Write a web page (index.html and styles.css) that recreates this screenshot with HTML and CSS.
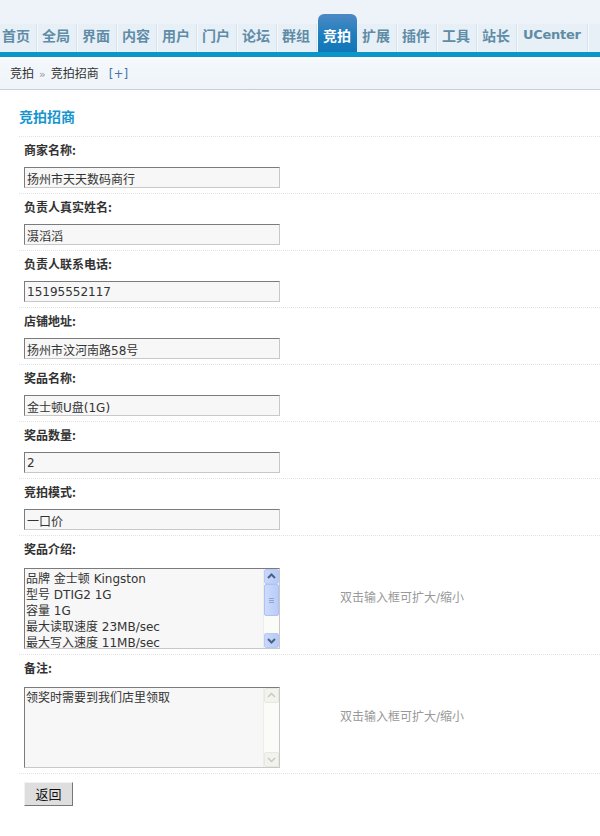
FILE: index.html
```html
<!DOCTYPE html>
<html lang="zh-CN">
<head>
<meta charset="utf-8">
<title>竞拍招商</title>
<link rel="stylesheet" href="styles.css">
</head>
<body>
<div class="header">
  <ul class="nav">
    <li class="item first">首页</li>
    <li class="item">全局</li>
    <li class="item">界面</li>
    <li class="item">内容</li>
    <li class="item">用户</li>
    <li class="item">门户</li>
    <li class="item">论坛</li>
    <li class="item">群组</li>
    <li class="item active">竞拍</li>
    <li class="item">扩展</li>
    <li class="item">插件</li>
    <li class="item">工具</li>
    <li class="item">站长</li>
    <li class="item latin">UCenter</li>
  </ul>
  <div class="bluebar"></div>
</div>
<div class="crumb">
  <span>竞拍</span><span class="sep">»</span><span>竞拍招商</span><a class="plus">[+]</a>
</div>
<div class="content">
  <h3 class="title">竞拍招商</h3>
  <div class="row">
    <div class="label">商家名称:</div>
    <input class="txt" type="text" value="扬州市天天数码商行">
  </div>
  <div class="row">
    <div class="label">负责人真实姓名:</div>
    <input class="txt" type="text" value="滠滔滔">
  </div>
  <div class="row">
    <div class="label">负责人联系电话:</div>
    <input class="txt" type="text" value="15195552117">
  </div>
  <div class="row">
    <div class="label">店铺地址:</div>
    <input class="txt" type="text" value="扬州市汶河南路58号">
  </div>
  <div class="row">
    <div class="label">奖品名称:</div>
    <input class="txt" type="text" value="金士顿U盘(1G)">
  </div>
  <div class="row">
    <div class="label">奖品数量:</div>
    <input class="txt" type="text" value="2">
  </div>
  <div class="row">
    <div class="label">竞拍模式:</div>
    <input class="txt" type="text" value="一口价">
  </div>
  <div class="row split">
    <div class="left">
      <div class="label">奖品介绍:</div>
      <div class="area">
        <div class="areatext">品牌 金士顿 Kingston<br>型号 DTIG2 1G<br>容量 1G<br>最大读取速度 23MB/sec<br>最大写入速度 11MB/sec</div>
        <div class="sbar">
          <div class="sbtn"><svg width="15" height="15" viewBox="0 0 15 15"><path d="M4 9 L7.5 5.5 L11 9" fill="none" stroke="#4d6185" stroke-width="2"/></svg></div>
          <div class="thumb"><svg width="15" height="32" viewBox="0 0 15 32"><path d="M5 14.5h5M5 16.5h5M5 18.5h5" stroke="#8ea4d8" stroke-width="1"/></svg></div>
          <div class="track"></div>
          <div class="sbtn"><svg width="15" height="15" viewBox="0 0 15 15"><path d="M4 6 L7.5 9.5 L11 6" fill="none" stroke="#4d6185" stroke-width="2"/></svg></div>
        </div>
      </div>
    </div>
    <div class="hint">双击输入框可扩大/缩小</div>
  </div>
  <div class="row split">
    <div class="left">
      <div class="label">备注:</div>
      <div class="area">
        <div class="areatext">领奖时需要到我们店里领取</div>
        <div class="sbar off">
          <div class="sbtn"><svg width="15" height="15" viewBox="0 0 15 15"><path d="M4 9 L7.5 5.5 L11 9" fill="none" stroke="#c9c9c0" stroke-width="1.5"/></svg></div>
          <div class="track"></div>
          <div class="sbtn"><svg width="15" height="15" viewBox="0 0 15 15"><path d="M4 6 L7.5 9.5 L11 6" fill="none" stroke="#c9c9c0" stroke-width="1.5"/></svg></div>
        </div>
      </div>
    </div>
    <div class="hint">双击输入框可扩大/缩小</div>
  </div>
  <div class="row btnrow">
    <button class="btn" type="button">返回</button>
  </div>
</div>
</body>
</html>
```
FILE: styles.css
```css
html, body {
  margin: 0;
  padding: 0;
  background: #fff;
}
body {
  font: 12px/18px "DejaVu Sans", "Noto Sans CJK SC", sans-serif;
  color: #333;
}
.header {
  background: #eef3fa;
  padding-top: 14px;
}
.nav {
  list-style: none;
  margin: 0;
  padding: 0;
  display: flex;
  align-items: flex-end;
  background: linear-gradient(to bottom, #eef3fa 10px, #e8f0f7 10px);
}
.item {
  font: bold 14px/22px "Noto Sans CJK SC", sans-serif;
  color: #5f8ca6;
  padding: 0 6px 6px 5px;
  border-right: 1px solid #d8e3ed;
  box-shadow: 1px 0 0 #f6f9fc;
}
.item.first {
  padding-left: 2px;
}
.item.active {
  color: #fff;
  padding-top: 10px;
  margin-left: 1px;
  border-right: none;
  box-shadow: none;
  border-radius: 6px 6px 0 0;
  background: linear-gradient(to bottom, #4d89c4, #1b7dbe 60%, #1376b7);
}
.item.latin {
  font-family: "DejaVu Sans", sans-serif;
  font-size: 13px;
  letter-spacing: -0.3px;
  margin-left: 1px;
}
.bluebar {
  height: 5px;
  background: #0a96c9;
}
.crumb {
  margin-top: 2px;
  height: 30px;
  line-height: 31px;
  padding-left: 10px;
  background: linear-gradient(to bottom, #f4f8fc, #eef4f9);
  border-bottom: 1px solid #c8cfd6;
  color: #333;
}
.crumb .sep {
  color: #999;
  margin: 0 5px;
  font-size: 11px;
}
.crumb .plus {
  color: #4a74a8;
  margin-left: 10px;
}
.content {
  padding-left: 19px;
}
.title {
  margin: 0;
  padding-top: 17px;
  height: 29px;
  font: bold 14px/18px "Noto Sans CJK SC", sans-serif;
  color: #1695cf;
}
.row {
  border-top: 1px dotted #e3e3e3;
  padding: 4px 0 5px 5px;
}
.label {
  font-weight: bold;
  font-family: "Noto Sans CJK SC", sans-serif;
  color: #333;
  line-height: 18px;
  margin-bottom: 8px;
}
.txt {
  display: block;
  box-sizing: border-box;
  width: 256px;
  height: 21px;
  margin: 0;
  padding: 1px 2px 0;
  font: 12px/18px "DejaVu Sans", "Noto Sans CJK SC", sans-serif;
  color: #333;
  background: #f7f7f7;
  border: 1px solid;
  border-color: #7b7b7b #c8c8c8 #c8c8c8 #7b7b7b;
  outline: none;
}
.split {
  display: flex;
  align-items: center;
}
.left {
  width: 256px;
}
.label + .area {
  margin-top: 10px;
}
.area {
  box-sizing: border-box;
  width: 256px;
  height: 81px;
  display: flex;
  background: #f7f7f7;
  border: 1px solid;
  border-color: #7b7b7b #c8c8c8 #c8c8c8 #7b7b7b;
}
.areatext {
  flex: 1;
  overflow: hidden;
  padding: 2px 0 0 1px;
  line-height: 16px;
  color: #333;
}
.sbar {
  width: 15px;
  display: flex;
  flex-direction: column;
  background: #fbfbf8;
  border-left: 1px solid #eeeee8;
}
.sbtn {
  height: 15px;
  border: 1px solid #b7c9f5;
  box-sizing: border-box;
  border-radius: 2px;
  background: linear-gradient(to right, #c9d8fb, #b6cbf7);
}
.sbtn svg {
  display: block;
  margin: -1px;
}
.thumb {
  height: 32px;
  box-sizing: border-box;
  border: 1px solid #aec3f1;
  border-radius: 2px;
  background: linear-gradient(to right, #cddbfc, #b9cdf8);
}
.thumb svg {
  display: block;
  margin: -1px;
}
.track {
  flex: 1;
}
.sbar.off .sbtn {
  border-color: #e8e8e2;
  background: #f3f3ee;
}
.hint {
  margin-left: 60px;
  color: #999;
  padding-top: 7px;
}
.btnrow {
  padding-top: 8px;
}
.btn {
  width: 49px;
  height: 24px;
  padding: 0;
  font: 13px/20px "Noto Sans CJK SC", sans-serif;
  color: #111;
  background: #dedede;
  border: 1px solid;
  border-color: #f2f2f2 #777 #777 #f2f2f2;
}
```
